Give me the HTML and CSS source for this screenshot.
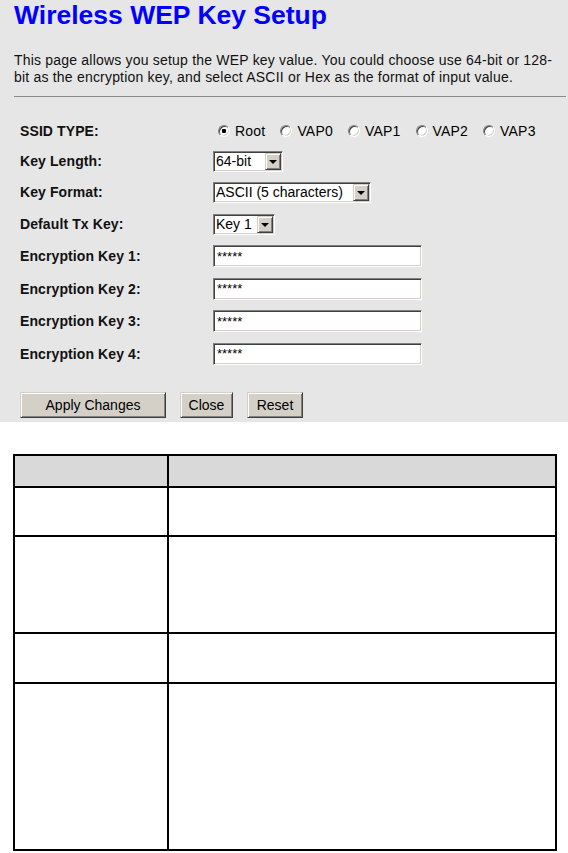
FILE: index.html
```html
<!DOCTYPE html>
<html>
<head>
<meta charset="utf-8">
<title>Wireless WEP Key Setup</title>
<link rel="stylesheet" href="styles.css">
</head>
<body>
<div class="panel">
  <h1 class="title">Wireless WEP Key Setup</h1>
  <p class="intro">This page allows you setup the WEP key value. You could choose use 64-bit or 128-bit as the encryption key, and select ASCII or Hex as the format of input value.</p>
  <hr class="rule">
  <form class="form">
    <div class="row row-short">
      <span class="label">SSID TYPE:</span>
      <span class="radios">
        <label class="radio"><input type="radio" name="ssid" checked>Root</label>
        <label class="radio"><input type="radio" name="ssid">VAP0</label>
        <label class="radio"><input type="radio" name="ssid">VAP1</label>
        <label class="radio"><input type="radio" name="ssid">VAP2</label>
        <label class="radio"><input type="radio" name="ssid">VAP3</label>
      </span>
    </div>
    <div class="row row-short">
      <span class="label">Key Length:</span>
      <span class="sel"><select class="select w-len"><option>64-bit</option><option>128-bit</option></select></span>
    </div>
    <div class="row">
      <span class="label">Key Format:</span>
      <span class="sel"><select class="select w-fmt"><option>ASCII (5 characters)</option><option>Hex (10 characters)</option></select></span>
    </div>
    <div class="row">
      <span class="label">Default Tx Key:</span>
      <span class="sel"><select class="select w-key"><option>Key 1</option><option>Key 2</option><option>Key 3</option><option>Key 4</option></select></span>
    </div>
    <div class="row">
      <span class="label">Encryption Key 1:</span>
      <input class="text" type="text" value="*****">
    </div>
    <div class="row row-tall">
      <span class="label">Encryption Key 2:</span>
      <input class="text" type="text" value="*****">
    </div>
    <div class="row">
      <span class="label">Encryption Key 3:</span>
      <input class="text" type="text" value="*****">
    </div>
    <div class="row row-tall">
      <span class="label">Encryption Key 4:</span>
      <input class="text" type="text" value="*****">
    </div>
    <div class="buttons">
      <button type="button" class="btn btn-apply">Apply Changes</button>
      <button type="button" class="btn btn-close">Close</button>
      <button type="button" class="btn btn-reset">Reset</button>
    </div>
  </form>
</div>
<div class="table-wrap">
  <table class="grid">
    <tr class="r-head"><th class="c1"></th><th class="c2"></th></tr>
    <tr class="r1"><td></td><td></td></tr>
    <tr class="r2"><td></td><td></td></tr>
    <tr class="r3"><td></td><td></td></tr>
    <tr class="r4"><td></td><td></td></tr>
  </table>
</div>
</body>
</html>
```
FILE: styles.css
```css
html, body {
  margin: 0;
  padding: 0;
  background: #ffffff;
  font-family: "Liberation Sans", Arial, sans-serif;
  color: #000;
}

.panel {
  background: #e6e6e6;
  padding: 0 2px 4px 14px;
}

.title {
  margin: 0;
  font-size: 26.5px;
  line-height: 30px;
  font-weight: bold;
  color: #0000ff;
}

.intro {
  margin: 22px 0 0 0;
  font-size: 14px;
  line-height: 17px;
  letter-spacing: 0.2px;
  color: #111;
  padding-right: 8px;
}

.rule {
  margin: 10px 0 0 0;
  height: 0;
  border: 0;
  border-top: 1px solid #8a8a8a;
}

.form {
  margin: 19px 0 0 6px;
}

.row {
  display: flex;
  align-items: center;
  height: 32px;
}
.row-short { height: 30px; }
.row-tall { height: 33px; }

.label {
  width: 193px;
  flex: none;
  font-size: 14px;
  font-weight: bold;
  letter-spacing: 0.1px;
  color: #111;
}

.radios {
  display: flex;
  align-items: center;
  gap: 15px;
  padding-left: 5px;
  font-size: 14px;
  letter-spacing: 0.2px;
}
.radio {
  display: inline-flex;
  align-items: center;
  gap: 5px;
}
.radio input {
  appearance: none;
  -webkit-appearance: none;
  margin: 0;
  width: 12px;
  height: 12px;
  border-radius: 50%;
  border: 1px solid;
  border-color: #808080 #ffffff #ffffff #808080;
  background: #ffffff;
  box-shadow: inset 1px 1px 0 #404040, inset -1px -1px 0 #d4d0c8;
}
.radio input:checked {
  background: radial-gradient(circle, #000 0 2px, #fff 2.5px);
}

.sel {
  position: relative;
  display: inline-block;
  line-height: 0;
}
.sel::before {
  content: "";
  position: absolute;
  top: 2px;
  right: 2px;
  width: 14px;
  height: 15px;
  background: #d4d0c8;
  border: 1px solid;
  border-color: #d4d0c8 #404040 #404040 #d4d0c8;
  box-shadow: inset 1px 1px 0 #ffffff, inset -1px -1px 0 #808080;
  pointer-events: none;
}
.sel::after {
  content: "";
  position: absolute;
  top: 9px;
  right: 6px;
  width: 0;
  height: 0;
  border-left: 4px solid transparent;
  border-right: 4px solid transparent;
  border-top: 4px solid #000;
  pointer-events: none;
}
.select {
  appearance: none;
  -webkit-appearance: none;
  box-sizing: border-box;
  height: 21px;
  margin: 0;
  padding: 0 18px 0 2px;
  font-family: "Liberation Sans", Arial, sans-serif;
  font-size: 14px;
  color: #000;
  background: #ffffff;
  border: 1px solid;
  border-color: #808080 #ffffff #ffffff #808080;
  box-shadow: inset 1px 1px 0 #404040, inset -1px -1px 0 #d4d0c8;
  border-radius: 0;
  outline: none;
}
.w-len { width: 70px; }
.w-fmt { width: 158px; }
.w-key { width: 62px; }

.text {
  box-sizing: border-box;
  width: 209px;
  height: 22px;
  margin: 0;
  padding: 0 3px;
  font-family: "Liberation Sans", Arial, sans-serif;
  font-size: 13px;
  color: #000;
  background: #ffffff;
  border: 1px solid;
  border-color: #808080 #ffffff #ffffff #808080;
  box-shadow: inset 1px 1px 0 #404040, inset -1px -1px 0 #d4d0c8;
  border-radius: 0;
  outline: none;
}

.buttons {
  display: flex;
  gap: 14px;
  margin-top: 22px;
}
.btn {
  box-sizing: border-box;
  height: 26px;
  margin: 0;
  padding: 0;
  font-family: "Liberation Sans", Arial, sans-serif;
  font-size: 14px;
  color: #000;
  background: #d4d0c8;
  border: 1px solid;
  border-color: #d4d0c8 #404040 #404040 #d4d0c8;
  box-shadow: inset 1px 1px 0 #ffffff, inset -1px -1px 0 #808080;
  border-radius: 0;
}
.btn-apply { width: 146px; }
.btn-close { width: 53px; }
.btn-reset { width: 56px; }

.table-wrap {
  padding: 32px 11px 0 13px;
}
.grid {
  width: 544px;
  border-collapse: collapse;
  border: 2px solid #000;
}
.grid th, .grid td {
  border: 2px solid #000;
  padding: 0;
}
.grid th { background: #d9d9d9; }
.c1 { width: 152px; }
.r-head { height: 32px; }
.r1 { height: 49px; }
.r2 { height: 97px; }
.r3 { height: 50px; }
.r4 { height: 167px; }
```
